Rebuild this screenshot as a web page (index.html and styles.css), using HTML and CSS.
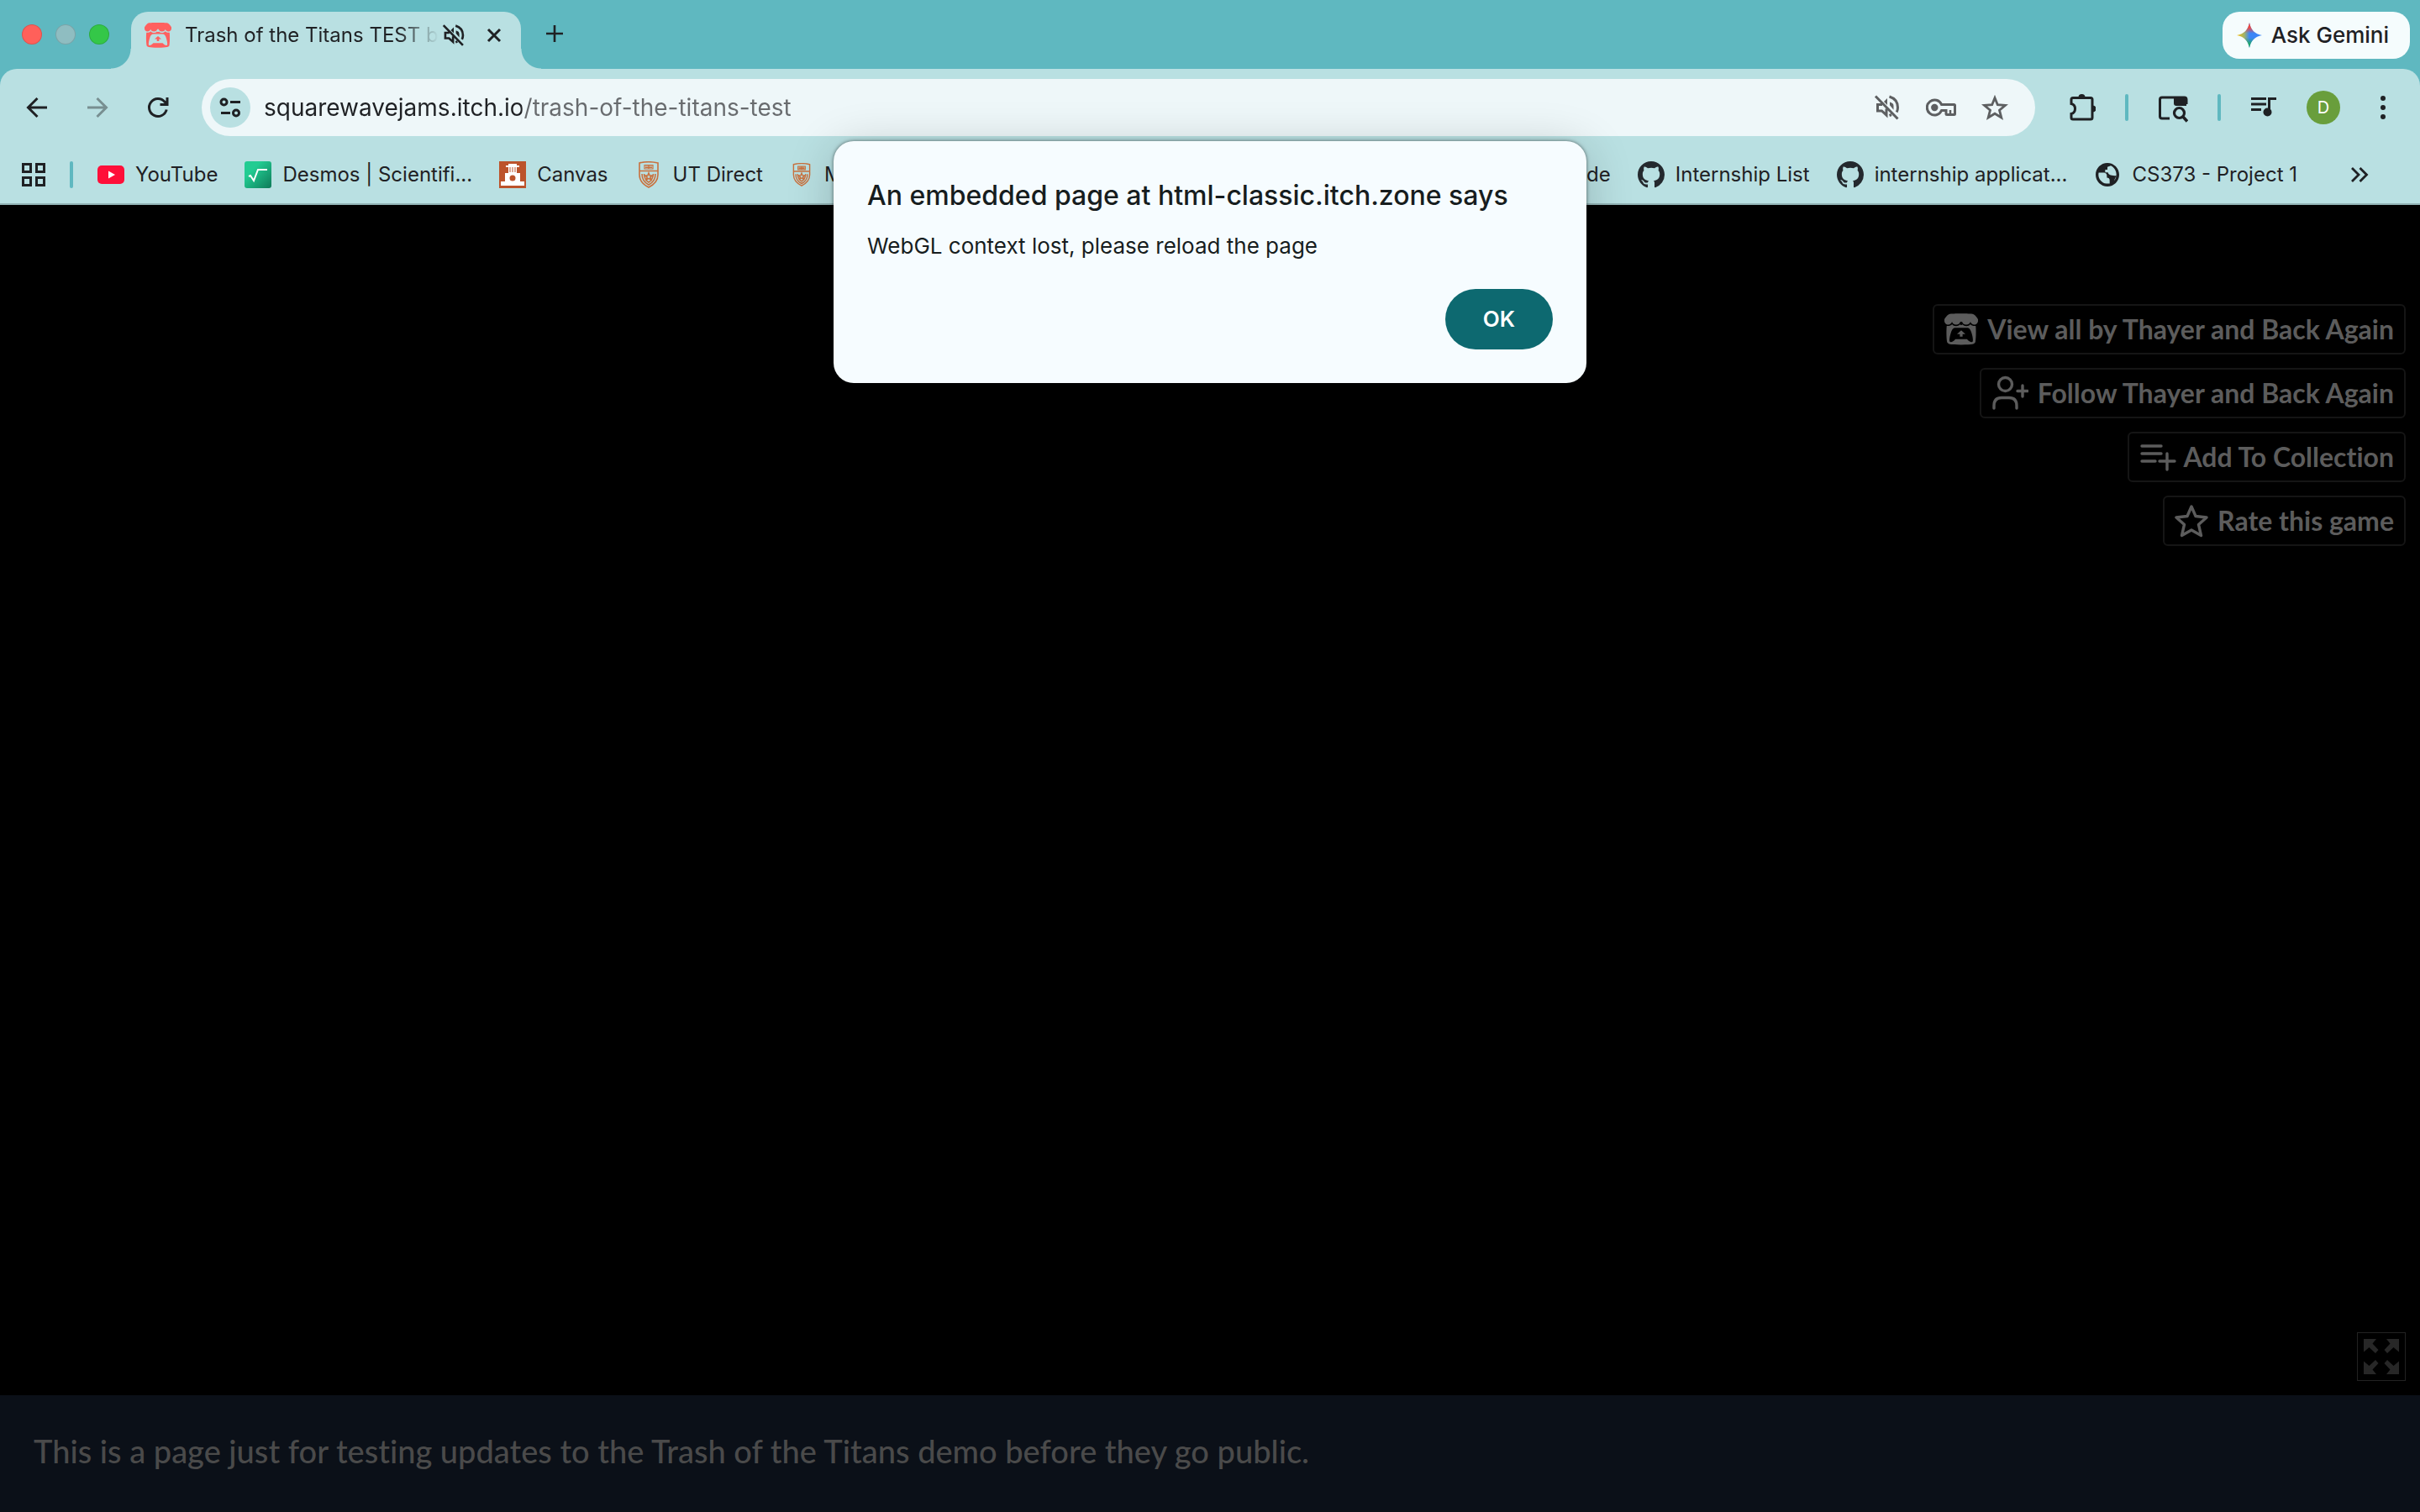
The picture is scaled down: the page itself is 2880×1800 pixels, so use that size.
FILE: index.html
```html
<!DOCTYPE html>
<html lang="en">
<head>
<meta charset="utf-8">
<title>Trash of the Titans TEST</title>
<link rel="stylesheet" href="styles.css">
</head>
<body>
<svg class="defs" aria-hidden="true">
  <symbol id="github" viewBox="0 0 16 16"><path d="M8 0C3.58 0 0 3.58 0 8c0 3.54 2.29 6.53 5.47 7.59.4.07.55-.17.55-.38 0-.19-.01-.82-.01-1.49-2.01.37-2.53-.49-2.69-.94-.09-.23-.48-.94-.82-1.13-.28-.15-.68-.52-.01-.53.63-.01 1.08.58 1.23.82.72 1.21 1.87.87 2.33.66.07-.52.28-.87.51-1.07-1.78-.2-3.64-.89-3.64-3.95 0-.87.31-1.59.82-2.15-.08-.2-.36-1.02.08-2.12 0 0 .67-.21 2.2.82.64-.18 1.32-.27 2-.27.68 0 1.36.09 2 .27 1.53-1.04 2.2-.82 2.2-.82.44 1.1.16 1.92.08 2.12.51.56.82 1.27.82 2.15 0 3.07-1.87 3.75-3.65 3.95.29.25.54.73.54 1.48 0 1.07-.01 1.93-.01 2.2 0 .21.15.46.55.38A8.013 8.013 0 0016 8c0-4.42-3.58-8-8-8z"/></symbol>
  <symbol id="itch" viewBox="0 0 32 32"><path fill-rule="evenodd" d="M4.500 1.500C8 .9 24 .9 27.500 1.500C29 2.200 31.500 5 32 6.500V8C32 10 30.300 11.600 28.500 11.600C26.500 11.600 25 10 24.800 8.800C24.500 10.300 22.800 11.600 20.800 11.600C18.600 11.600 17.100 10.200 16.900 8.800H15.100C14.900 10.200 13.400 11.600 11.200 11.600C9.200 11.600 7.500 10.300 7.200 8.800C7 10 5.500 11.600 3.500 11.600C1.700 11.600 0 10 0 8V6.500C.5 5 3 2.200 4.500 1.500ZM7.300 11.200C9 13.500 13 13.500 14.800 11.400C15.500 12.200 16.500 12.200 17.200 11.400C19 13.500 23 13.500 24.700 11.200C26 12.600 28 13.200 29.800 12.700C30.300 18 30 25 29.500 28C29 30 27 30.700 16 30.700C5 30.700 3 30 2.500 28C2 25 1.700 18 2.200 12.700C4 13.200 6 12.600 7.300 11.200ZM11 14.500C8 14.500 7.300 16 6.300 19C5.300 22 4.500 26 5 27.500C6 29 8.500 27.500 10.500 25.300H21.500C23.500 27.500 26 29 27 27.500C27.500 26 26.700 22 25.700 19C24.700 16 24 14.500 21 14.500ZM16 17L20 20.500H17.300V23H14.700V20.500H12Z"/></symbol>
  <symbol id="muted" viewBox="0 0 32 32"><g fill="none" stroke="currentColor" stroke-width="3"><path d="M2 2.500L28.500 29.500M10 12.500H4.500V20H9.500L15 25V17.500M21 24.500L18.500 25.500M18.500 3C25 5 28.500 10 28.500 16C28.500 18 28 20 27.200 21.500"/><path d="M20 11V13L22.500 16V14C22.500 12.500 21.500 11.500 20 11Z" stroke-width="2"/></g><path d="M16 5V13L12 9Z" fill="currentColor"/></symbol>
  <symbol id="shield" viewBox="0 0 26 32"><g fill="none" stroke="#c9713e" stroke-width="1.600"><path d="M2 2Q13-.5 24 2V16C24 23 19 28 13 31C7 28 2 23 2 16ZM2 11.500H24"/><path d="M5 15Q5 24 13 28Q21 24 21 15M7.500 15Q8 22 13 25Q18 22 18.500 15"/><path d="M13 14L14.200 17H17.200L14.900 19L15.700 22L13 20.400L10.300 22L11.100 19L8.800 17H11.800Z"/><path d="M8 4.500H18V9H8ZM13 4.500V9M9 6H17M9 7.500H17" stroke-width="1.200"/></g></symbol>
</svg>

<header class="browser">
  <div class="tabstrip">
    <div class="lights"><i class="light red"></i><i class="light idle"></i><i class="light green"></i></div>
    <div class="tab">
      <svg class="i32 itch-red"><use href="#itch"/></svg>
      <span class="tab-title">Trash of the Titans TEST b</span>
      <button class="plain" aria-label="Unmute tab"><svg class="i28"><use href="#muted"/></svg></button>
      <button class="plain close" aria-label="Close tab"><svg class="i20" viewBox="0 0 20 20"><path d="M3 3L17 17M17 3L3 17" fill="none" stroke="currentColor" stroke-width="3"/></svg></button>
    </div>
    <button class="plain new-tab" aria-label="New tab"><svg class="i20" viewBox="0 0 20 20"><path d="M10 0V20M0 10H20" fill="none" stroke="currentColor" stroke-width="2.600"/></svg></button>
    <button class="gemini">
      <svg class="i32" viewBox="0 0 32 32"><defs><linearGradient id="gh" x1="0" x2="1" y1="0" y2="0"><stop offset="0" stop-color="#fbbc04"/><stop offset=".3" stop-color="#9fb36a"/><stop offset=".5" stop-color="#3c86f7"/><stop offset="1" stop-color="#3c86f7"/></linearGradient><linearGradient id="gv" x1="0" x2="0" y1="0" y2="1"><stop offset="0" stop-color="#f4453a"/><stop offset=".18" stop-color="#f4453a"/><stop offset=".42" stop-color="#f4453a" stop-opacity="0"/><stop offset=".6" stop-color="#1ea862" stop-opacity="0"/><stop offset=".85" stop-color="#1ea862"/></linearGradient></defs><path fill="url(#gh)" d="M16 1C17.500 9.500 22.500 14.500 31 16C22.500 17.500 17.500 22.500 16 31C14.500 22.500 9.500 17.500 1 16C9.500 14.500 14.500 9.500 16 1Z"/><path fill="url(#gv)" d="M16 1C17.500 9.500 22.500 14.500 31 16C22.500 17.500 17.500 22.500 16 31C14.500 22.500 9.500 17.500 1 16C9.500 14.500 14.500 9.500 16 1Z"/></svg>
      Ask Gemini
    </button>
  </div>

  <div class="toolbar">
    <nav class="nav" aria-label="Navigation">
      <button class="plain" aria-label="Back"><svg class="i32" viewBox="0 0 32 32"><path d="M28 16H6M16.500 5L5.500 16L16.500 27" fill="none" stroke="currentColor" stroke-width="3"/></svg></button>
      <button class="plain faded" aria-label="Forward"><svg class="i32" viewBox="0 0 32 32"><path d="M4 16H26M15.500 5L26.500 16L15.500 27" fill="none" stroke="currentColor" stroke-width="3"/></svg></button>
      <button class="plain" aria-label="Reload"><svg class="i32" viewBox="0 0 32 32"><path d="M26.200 18.500A10.500 10.500 0 1 1 24 9.200L27 12M27 4V12.500H18.500" fill="none" stroke="currentColor" stroke-width="3"/></svg></button>
    </nav>
    <div class="omnibox">
      <button class="site-info" aria-label="Site information"><svg class="i32" viewBox="0 0 32 32"><g fill="none" stroke="currentColor" stroke-width="3"><circle cx="8.500" cy="9.500" r="3.500"/><path d="M16 9.500H28M5 22.500H16"/><circle cx="23" cy="22.500" r="3.500"/></g></svg></button>
      <input class="url" type="text" aria-label="Address" value="squarewavejams.itch.io/trash-of-the-titans-test">
      <button class="plain" aria-label="Sound muted"><svg class="i32"><use href="#muted"/></svg></button>
      <button class="plain" aria-label="Passwords"><svg class="i36" viewBox="0 0 36 36"><g fill="none" stroke="currentColor" stroke-width="3"><path d="M18.600 14.500A9 9 0 1 0 18.600 21.500H24V25.500Q24 26.500 25 26.500H33.500Q34.500 26.500 34.500 25.500V15.500Q34.500 14.500 33.500 14.500Z"/><path d="M29 27V21" stroke-width="2.500"/></g><circle cx="10.300" cy="18" r="4.200" fill="currentColor"/></svg></button>
      <button class="plain" aria-label="Bookmark this page"><svg class="i32" viewBox="0 0 32 32"><path d="M16 4.500L19.300 12.700L28.500 13.300L21.500 19.200L23.800 28L16 23.200L8.200 28L10.500 19.200L3.500 13.300L12.700 12.700Z" fill="none" stroke="currentColor" stroke-width="2.800"/></svg></button>
    </div>
    <div class="actions">
      <button class="plain" aria-label="Extensions"><svg class="i36" viewBox="-3 0 36 36"><path d="M4 8.500Q4 6.500 6 6.500H27Q29 6.500 29 8.500V30Q29 32 27 32H6Q4 32 4 30V25.500Q8.500 24.500 8.500 19.500Q8.500 14.500 4 13.500Z" fill="none" stroke="currentColor" stroke-width="3"/><path d="M12.500 6A4 4 0 0 1 20.500 6ZM29.500 15.500A4 4 0 0 1 29.500 23.500Z" fill="currentColor"/></svg></button>
      <i class="sep"></i>
      <button class="plain" aria-label="Search side panel"><svg class="i36" viewBox="0 0 36 36"><path d="M14 31H5Q2.500 31 2.500 28.500V8.500Q2.500 6 5 6H31.500Q34 6 34 8.500V14" fill="none" stroke="currentColor" stroke-width="3"/><path d="M19 5H34V16H22Q19 16 19 13Z" fill="currentColor"/><circle cx="25.500" cy="24.500" r="6" fill="none" stroke="currentColor" stroke-width="3.200"/><path d="M29.500 28.500L35 34.500" stroke="currentColor" stroke-width="3.600"/></svg></button>
      <i class="sep"></i>
      <button class="plain" aria-label="Media controls"><svg class="i32" viewBox="0 0 32 32"><path d="M1 5.500H19M1 12H19M1 18.500H13M22.500 22V5.500H31" fill="none" stroke="currentColor" stroke-width="3"/><circle cx="20.500" cy="21.500" r="5" fill="currentColor"/></svg></button>
      <button class="avatar" aria-label="Profile">D</button>
      <button class="plain" aria-label="Menu"><svg class="i32" viewBox="0 0 32 32"><g fill="currentColor"><circle cx="16" cy="5" r="3"/><circle cx="16" cy="16" r="3"/><circle cx="16" cy="27" r="3"/></g></svg></button>
    </div>
  </div>

  <nav class="bookmarks" aria-label="Bookmarks">
    <button class="plain" aria-label="Tab groups"><svg class="i28" viewBox="0 0 28 28"><path d="M1.500 1.500H10.500V10.500H1.500ZM17.500 1.500H26.500V10.500H17.500ZM1.500 17.500H10.500V26.500H1.500ZM17.500 17.500H26.500V26.500H17.500Z" fill="none" stroke="currentColor" stroke-width="3"/></svg></button>
    <i class="sep"></i>
    <a class="bookmark" href="#"><svg class="i32" viewBox="0 0 32 32"><rect y="5" width="32" height="22" rx="5" fill="#ff0f39"/><path d="M13 11.500L21 16L13 20.500Z" fill="#fff"/></svg>YouTube</a>
    <a class="bookmark" href="#"><svg class="i32" viewBox="0 0 32 32"><defs><linearGradient id="dg" x1="0" y1="0" x2="1" y2="1"><stop offset=".3" stop-color="#22cc92"/><stop offset="1" stop-color="#0e7a58"/></linearGradient></defs><rect width="32" height="32" rx="3" fill="url(#dg)"/><path d="M5 18L7 17L11 23L16 10H27" fill="none" stroke="#fff" stroke-width="2"/></svg>Desmos | Scientifi...</a>
    <a class="bookmark" href="#"><svg class="i32" viewBox="0 0 32 32"><rect width="32" height="32" fill="#bc532b"/><path fill-rule="evenodd" d="M11 3H21V5H24V7H21V14H25V24H30V29H2V24H7V14H11V7H8V5H11ZM12.500 7V13H13.500V7ZM15.500 7V13H16.500V7ZM18.500 7V13H19.500V7ZM16 16.500A3.500 3.500 0 1 0 16 23.500A3.500 3.500 0 1 0 16 16.500Z" fill="#fff"/></svg>Canvas</a>
    <a class="bookmark" href="#"><svg class="i32"><use href="#shield"/></svg>UT Direct</a>
    <a class="bookmark" href="#"><svg class="i28"><use href="#shield"/></svg>M</a>
    <a class="bookmark rest" href="#">de</a>
    <a class="bookmark" href="#"><svg class="i32 git"><use href="#github"/></svg>Internship List</a>
    <a class="bookmark" href="#"><svg class="i32 git"><use href="#github"/></svg>internship applicat...</a>
    <a class="bookmark" href="#"><svg class="i32" viewBox="0 0 24 24"><path fill="currentColor" d="M12 1.500C6.200 1.500 1.500 6.200 1.500 12s4.700 10.500 10.500 10.500 10.500-4.700 10.500-10.500S17.800 1.500 12 1.500zm-1 18.430c-3.950-.49-7-3.850-7-7.930 0-.62.080-1.210.210-1.790H8c3 0 3.500 1.300 3.500 3v1.500c1.500 0 2.500.8 2.500 2.300V19.800zM17.900 17.390L20 13c-4 0-7-.5-7.500-3H10V7.500h2V5l3-1c2.930 1.190 5 4.660 5 8.010 0 2.080-.8 3.970-2.100 5.380z"/></svg>CS373 - Project 1</a>
    <button class="plain more" aria-label="More bookmarks"><svg class="i28" viewBox="0 0 28 28"><path d="M5 6L13 14L5 22M14.500 6L22.500 14L14.500 22" fill="none" stroke="currentColor" stroke-width="2.800"/></svg></button>
  </nav>

  <div class="dialog" role="alertdialog" aria-labelledby="dialog-title" aria-describedby="dialog-text">
    <h1 class="dialog-title" id="dialog-title">An embedded page at html-classic.itch.zone says</h1>
    <p class="dialog-text" id="dialog-text">WebGL context lost, please reload the page</p>
    <button class="ok">OK</button>
  </div>
</header>

<main class="game">
  <div class="game-actions">
    <a class="game-btn" href="#"><svg class="g40"><use href="#itch"/></svg>View all by Thayer and Back Again</a>
    <a class="game-btn" href="#"><svg class="g44" viewBox="0 0 44 44"><g fill="none" stroke="currentColor" stroke-width="3.400" stroke-linecap="round"><circle cx="16.500" cy="11.500" r="8"/><path d="M3 40V37Q3 27.500 12 27.500H21Q30 27.500 30 37V40M37 13V26M31 19.500H43"/></g></svg>Follow Thayer and Back Again</a>
    <a class="game-btn tight" href="#"><svg class="g44" viewBox="0 0 44 44"><path d="M3 9H26M3 18H26M3 27H19M24 27H42M33 18V37" fill="none" stroke="currentColor" stroke-width="3.400" stroke-linecap="round"/></svg>Add To Collection</a>
    <a class="game-btn" href="#"><svg class="g40" viewBox="0 0 40 40"><path d="M20 3L25 14.500L38 16L28.500 24.500L31.500 37.500L20 31L8.500 37.500L11.500 24.500L2 16L15 14.500Z" fill="none" stroke="currentColor" stroke-width="3.400" stroke-linejoin="round"/></svg>Rate this game</a>
  </div>
  <button class="fullscreen" aria-label="Fullscreen"><svg class="g42" viewBox="0 0 42 42"><g fill="currentColor"><path id="arrow" d="M0 0H15L10.500 5.500L17.500 13L14 17L6.500 10L0 15.500Z"/><use href="#arrow" transform="matrix(-1 0 0 1 42 0)"/><use href="#arrow" transform="matrix(1 0 0 -1 0 42)"/><use href="#arrow" transform="matrix(-1 0 0 -1 42 42)"/></g></svg></button>
</main>

<footer class="about"><p>This is a page just for testing updates to the Trash of the Titans demo before they go public.</p></footer>
</body>
</html>
```
FILE: styles.css
```css
* { box-sizing: border-box; }

body {
  margin: 0;
  min-height: 100vh;
  display: flex;
  flex-direction: column;
  background: #000;
  color: #1f2124;
  font: 24px/32px Inter, "Liberation Sans", sans-serif;
}

svg { display: block; flex: none; fill: currentColor; }
.defs { display: none; }
button, input { font: inherit; color: inherit; border: 0; padding: 0; background: none; }
a { color: inherit; text-decoration: none; }
p, h1 { margin: 0; }

.i20 { width: 20px; height: 20px; }
.i28 { width: 28px; height: 28px; }
.i32 { width: 32px; height: 32px; }
.i36 { width: 36px; height: 36px; }
.g40 { width: 40px; height: 40px; }
.g42 { width: 42px; height: 42px; }
.g44 { width: 44px; height: 44px; }
.git { color: #24292e; }
.faded { opacity: .42; }

.browser {
  position: relative;
  background: #5fb8c0;
  border-bottom: 2px solid #92b3b5;
}

/* Tab strip */
.tabstrip {
  display: flex;
  height: 82px;
  padding: 14px 12px 0 26px;
}
.lights { display: flex; gap: 16px; padding-top: 15px; width: 130px; }
.light { width: 24px; height: 24px; border-radius: 50%; border: 1px solid #0002; }
.red { background: #ff605a; }
.idle { background: #8fbdc1; }
.green { background: #34c748; }

.tab {
  position: relative;
  display: flex;
  align-items: center;
  width: 464px;
  height: 68px;
  padding: 0 22px 12px 16px;
  border-radius: 20px 20px 0 0;
  background: #b9e0e2;
}
.tab::before, .tab::after {
  content: "";
  position: absolute;
  bottom: 0;
  width: 24px;
  height: 24px;
}
.tab::before { right: 100%; background: radial-gradient(circle at 0 0, transparent 23px, #b9e0e2 24px); }
.tab::after { left: 100%; background: radial-gradient(circle at 100% 0, transparent 23px, #b9e0e2 24px); }
.itch-red { color: #ff605f; }
.tab-title {
  flex: 1;
  margin: 0 4px 0 16px;
  overflow: hidden;
  white-space: nowrap;
  mask-image: linear-gradient(90deg, #000 calc(100% - 48px), transparent);
}
.close { margin-left: 24px; }
.new-tab { align-self: flex-start; padding: 16px 30px; }
.gemini {
  display: flex;
  align-items: center;
  gap: 10px;
  height: 56px;
  margin-left: auto;
  padding: 0 25px 0 16px;
  border-radius: 20px;
  background: #f5fcfd;
  font-size: 26px;
  font-weight: 500;
}

/* Toolbar */
.toolbar {
  display: flex;
  align-items: center;
  height: 80px;
  padding: 12px 28px 0;
  border-radius: 20px 20px 0 0;
  background: #b9e0e2;
}
.nav { display: flex; gap: 40px; width: 212px; }
.omnibox {
  flex: 1;
  display: flex;
  align-items: center;
  gap: 30px;
  height: 68px;
  padding: 0 32px 0 10px;
  border-radius: 34px;
  background: #eef7f9;
  color: #5d5f61;
}
.site-info {
  display: grid;
  place-items: center;
  width: 48px;
  height: 48px;
  border-radius: 50%;
  background: #b9e0e2;
  color: #1f2124;
}
.url {
  flex: 1;
  height: 48px;
  margin-left: -14px;
  font-size: 28px;
  outline: 0;
  color: transparent;
  background: linear-gradient(90deg, #1f2124 307px, #686b6e 307px);
  background-clip: text;
}
.actions { display: flex; align-items: center; margin-left: 36px; gap: 35px; }
.sep { width: 4px; height: 32px; border-radius: 2px; background: #5fb8c0; }
.avatar {
  width: 40px;
  height: 40px;
  border-radius: 50%;
  background: #699e3c;
  color: #fff;
  font-size: 20px;
}

/* Bookmarks */
.bookmarks {
  display: flex;
  align-items: center;
  gap: 32px;
  height: 80px;
  padding: 12px 58px 0 26px;
  background: #b9e0e2;
  white-space: nowrap;
}
.bookmark { display: flex; align-items: center; gap: 13px; }
.bookmarks .sep { margin: 0 -3px; }
.rest { flex: 1; justify-content: flex-end; }
.more { margin-left: 28px; }

/* Alert */
.dialog {
  position: absolute;
  top: 168px;
  left: 50%;
  transform: translateX(-50%);
  display: flex;
  flex-direction: column;
  width: 896px;
  padding: 45px 40px 40px;
  border-radius: 24px;
  background: #f6fcff;
  color: #171d1e;
  box-shadow: 0 0 4px #0008, 0 8px 56px #0003;
}
.dialog-title { font-size: 32px; line-height: 40px; font-weight: 500; }
.dialog-text { margin-top: 24px; font-size: 26px; }
.ok {
  align-self: flex-end;
  width: 128px;
  height: 72px;
  margin-top: 35px;
  border-radius: 36px;
  background: #0d6970;
  color: #fff;
  font-size: 26px;
  font-weight: 600;
}

/* Game page */
.game {
  flex: 1;
  display: flex;
  flex-direction: column;
  align-items: flex-end;
  justify-content: space-between;
  padding: 118px 17px 17px;
}
.game-actions { display: flex; flex-direction: column; align-items: flex-end; gap: 16px; }
.game-btn {
  display: flex;
  align-items: center;
  gap: 11px;
  height: 60px;
  padding: 0 12px;
  border: 2px solid #151515;
  border-radius: 6px;
  color: #5c5c5c;
  font: bold 32px/40px Lato, sans-serif;
  font-variant-ligatures: none;
}
.tight { gap: 8px; }
.fullscreen {
  display: grid;
  place-items: center;
  width: 58px;
  height: 58px;
  border: 1px solid #222;
  color: #272727;
}

.about {
  padding: 42px 40px 49px;
  background: #0b1018;
  color: #4a4a4a;
  font: 500 38px/48px Lato, sans-serif;
  font-variant-ligatures: none;
}
```
